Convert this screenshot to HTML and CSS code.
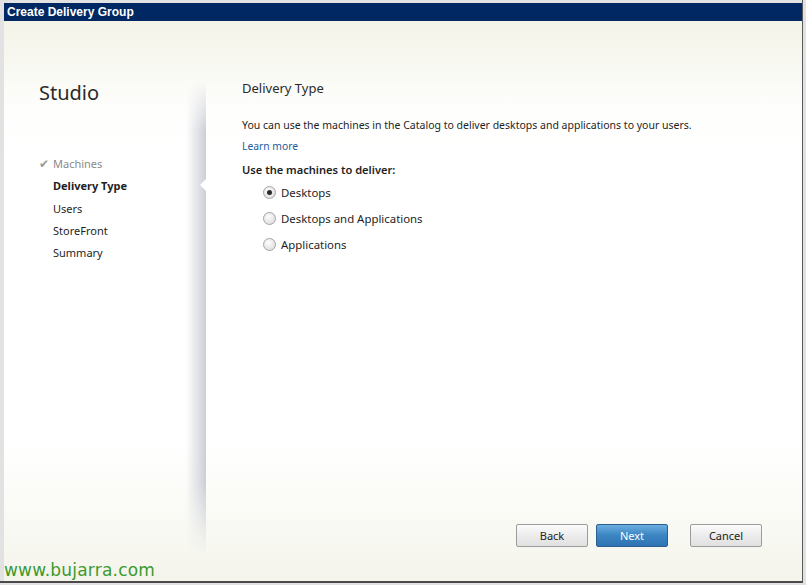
FILE: index.html
```html
<!DOCTYPE html>
<html lang="en">

<head>
    <meta charset="UTF-8">
    <title>Create Delivery Group</title>
    <link rel="stylesheet" href="styles.css">
</head>

<body>
    <div class="window">
        <div class="titlebar">Create Delivery Group</div>
        <div class="main">
            <div class="sidebar">
                <div class="nav">
                    <h1 class="brand">Studio</h1>
                    <ul class="steps">
                        <li class="done"><span class="check">&#10004;</span>Machines</li>
                        <li class="current">Delivery Type</li>
                        <li>Users</li>
                        <li>StoreFront</li>
                        <li>Summary</li>
                    </ul>
                </div>
                <div class="shade"><span class="notch"></span></div>
            </div>
            <div class="content">
                <h2>Delivery Type</h2>
                <p class="intro">You can use the machines in the Catalog to deliver desktops and applications to your users.</p>
                <a class="learn" href="#">Learn more</a>
                <p class="question">Use the machines to deliver:</p>
                <div class="options">
                    <label class="option"><span class="radio checked"></span>Desktops</label>
                    <label class="option"><span class="radio"></span>Desktops and Applications</label>
                    <label class="option"><span class="radio"></span>Applications</label>
                </div>
                <div class="buttons">
                    <button class="btn">Back</button>
                    <button class="btn primary">Next</button>
                    <button class="btn cancel">Cancel</button>
                </div>
            </div>
        </div>
        <div class="watermark">www.bujarra.com</div>
    </div>
</body>

</html>
```

FILE: styles.css
```css
html,
body {
    margin: 0;
    padding: 0;
}

body {
    width: 806px;
    height: 585px;
    background-color: #e2e2e2;
    font-family: "Noto Sans", "Open Sans", sans-serif;
    color: #1e1e1e;
}

.window {
    position: relative;
    box-sizing: border-box;
    width: 803px;
    height: 583px;
    padding: 3px 0 0 3px;
    border-right: 1px solid #5a5a5a;
    border-bottom: 2px solid #4a4a4a;
    display: flex;
    flex-direction: column;
}

.titlebar {
    height: 18px;
    line-height: 18px;
    background-color: #012862;
    color: #fff;
    font-family: "Liberation Sans", Arial, sans-serif;
    font-weight: bold;
    font-size: 12px;
    padding-left: 3px;
    margin-left: 1px;
}

.main {
    flex: 1;
    display: flex;
    margin-left: 1px;
    background: linear-gradient(to bottom, #f3f3e8 0, #f8f8f1 40px, #fefefd 90px, #fff 140px, #fff 420px, #f8f8f2 520px, #f4f4eb 100%);
}

.sidebar {
    width: 202px;
    display: flex;
}

.nav {
    flex: 1;
}

.brand {
    margin: 60px 0 0 35px;
    font-size: 20px;
    font-weight: normal;
    color: #2a2a2a;
    line-height: 24px;
}

.steps {
    list-style: none;
    margin: 48px 0 0 49px;
    padding: 0;
    font-size: 11px;
}

.steps li {
    height: 22.3px;
    line-height: 22px;
    color: #1e1e1e;
}

.steps .done {
    color: #8a8a8a;
    margin-left: -14px;
}

.check {
    display: inline-block;
    width: 14px;
    font-size: 12px;
    color: #9a9a9a;
}

.steps .current {
    font-weight: bold;
}

.shade {
    position: relative;
    width: 20px;
    margin: 60px 0 26px;
    background: linear-gradient(to right, rgba(255, 255, 255, 0), rgba(200, 204, 212, 0.95));
    -webkit-mask-image: linear-gradient(to bottom, transparent 0, #000 50px, #000 85%, transparent 100%);
    mask-image: linear-gradient(to bottom, transparent 0, #000 50px, #000 85%, transparent 100%);
}

.notch {
    position: absolute;
    right: 0;
    top: 98px;
    width: 0;
    height: 0;
    border-top: 6px solid transparent;
    border-bottom: 6px solid transparent;
    border-right: 6px solid #fff;
}

.content {
    flex: 1;
    display: flex;
    flex-direction: column;
    padding: 0 40px 34px 36px;
    font-size: 10.5px;
}

.content h2 {
    margin: 58px 0 0;
    font-size: 13px;
    font-weight: normal;
    line-height: 18px;
    color: #2a2a2a;
}

.intro {
    margin: 20px 0 0;
    line-height: 16px;
}

.learn {
    margin-top: 5px;
    line-height: 16px;
    font-size: 10.3px;
    color: #1d5d9c;
    text-decoration: none;
    align-self: flex-start;
}

.question {
    margin: 8px 0 0;
    line-height: 16px;
    font-size: 11.1px;
    font-weight: 600;
}

.options {
    display: flex;
    flex-direction: column;
    margin: 1px 0 0 21px;
}

.option {
    display: flex;
    align-items: center;
    height: 26px;
    font-size: 11.4px;
}

.radio {
    box-sizing: border-box;
    width: 13px;
    height: 13px;
    margin-right: 5px;
    border-radius: 50%;
    border: 1px solid #a4a4a4;
    background: radial-gradient(circle at 40% 35%, #fdfdfd, #e2e2e2 70%, #d0d0d0);
    display: flex;
    align-items: center;
    justify-content: center;
}

.radio.checked::after {
    content: "";
    width: 5px;
    height: 5px;
    border-radius: 50%;
    background: #2b2b2b;
}

.buttons {
    margin-top: auto;
    display: flex;
    justify-content: flex-end;
}

.btn {
    box-sizing: border-box;
    width: 72px;
    height: 23px;
    margin-left: 8px;
    border: 1px solid #9c9c9c;
    border-radius: 2px;
    background: linear-gradient(to bottom, #fbfbfb, #ececec 50%, #e0e0e0);
    font-family: "Noto Sans", "Open Sans", sans-serif;
    font-size: 11px;
    color: #222;
    padding: 0;
}

.btn.primary {
    border-color: #2a5f90;
    background: linear-gradient(to bottom, #6aaee0, #3b84c2 50%, #2f74b3);
    color: #fff;
}

.btn.cancel {
    margin-left: 22px;
}

.watermark {
    position: absolute;
    left: 4px;
    bottom: 1px;
    font-family: "DejaVu Sans", Verdana, sans-serif;
    font-size: 17px;
    color: #3c9a2e;
    letter-spacing: 0.2px;
}
```
